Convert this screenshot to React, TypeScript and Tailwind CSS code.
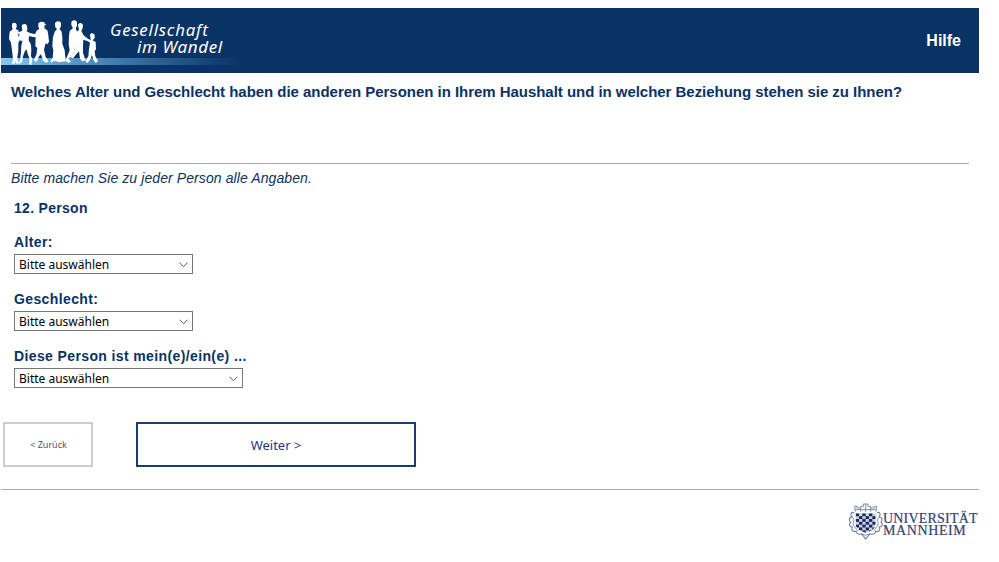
function People() {
  return (
    <svg className="relative block h-[65px] w-[100px] shrink-0" viewBox="3 24 300 195" fill="#fff">
      <path d="M36 74C35 66 49 66 50 74L50 81L47 87L55 91L57 98L54 107L59 121L55 129L55 152L52 171L54 184L60 190L50 191L45 183L46 190L36 192L39 178L36 151L33 128L27 116L29 95L38 88L36 82Z" />
      <path d="M65 78C66 70 79 70 81 77L82 88L80 94L88 98L103 103L101 110L87 109L86 121L93 134L94 151L93 168L97 178L94 195L87 192L89 178L84 164L79 148L75 153L69 169L66 187L57 191L61 175L63 156L64 137L68 119L65 124L54 118L52 111L59 106L56 97L67 92Z" />
      <path d="M115 70L122 65L132 66L135 71L139 74L134 76L133 85L142 91L145 106L147 125L142 133L137 130L132 149L137 171L146 184L139 188L130 183L123 163L117 169L110 186L101 181L109 164L112 144L106 139L107 112L99 111L91 106L94 101L105 102L111 91L118 87L115 80Z" />
      <path d="M165 72C165 61 182 61 183 70L183 79L179 87L185 95L187 111L187 131L194 151L197 184L187 185L178 187L169 184L160 183L154 189L151 182L158 174L160 151L157 137L159 110L165 94L171 88L166 82Z" />
      <path d="M214 68C215 58 230 59 231 68L231 78L227 85L232 97L230 121L225 139L222 157L211 171L205 177L213 184L206 189L196 182L202 168L209 151L206 133L207 107L209 93L219 84L214 76Z" />
      <path d="M234 76C236 66 248 68 249 77L247 87L244 92L250 105L261 114L268 119L264 124L250 119L249 137L249 158L254 174L258 181L247 184L240 176L237 154L230 161L219 175L208 171L220 160L224 144L225 120L227 99L237 89Z" />
      <path d="M270 105C271 97 283 98 284 106L284 114L278 121L287 126L288 148L284 153L286 169L294 184L287 189L280 179L276 165L271 178L263 189L256 184L265 169L267 146L270 128L260 121L263 117L272 120Z" />
    </svg>
  );
}

function Crest() {
  const checks = [];
  for (let row = 0; row < 7; row++) {
    for (let col = 0; col < 6; col++) {
      if ((row + col) % 2 === 0) checks.push(<rect key={`${row}-${col}`} x={45 + col * 10} y={56 + row * 8.5} width="10" height="8.5" />);
    }
  }
  return (
    <svg className="block h-[38px] w-[35px] shrink-0" viewBox="22 22 105 114" fill="none" stroke="#6d799d" strokeWidth="3.2">
      <defs>
        <clipPath id="shield"><path d="M45 56H105V87C105 101 92 109 75 114C58 109 45 101 45 87Z" /></clipPath>
      </defs>
      <path d="M44 51L42 35H49V40H60V35H68V28H82V35H90V40H101V35H108L106 51M44 45H106M60 40V51M75 28V51M90 40V51" strokeWidth="2.6" />
      <path d="M40 54C29 50 29 62 35 67C24 67 24 78 30 83C23 89 27 98 35 97C31 108 39 113 46 110C46 120 57 119 64 118L75 133L87 118C95 119 105 120 105 110C113 113 120 107 116 97C126 97 127 87 121 82C127 74 123 67 115 67C121 60 118 50 109 54" />
      <path d="M38 70C42 77 35 83 39 94C45 97 45 104 52 109M112 70C108 77 115 83 111 94C105 97 105 104 98 109M62 117L75 122L88 117" strokeWidth="2.4" />
      <path d="M45 56H105V87C105 101 92 109 75 114C58 109 45 101 45 87Z" fill="#c9cfde" stroke="none" />
      <g fill="#1a2a60" stroke="none" clipPath="url(#shield)">{checks}</g>
    </svg>
  );
}

function SelectField({ label, wide = false }: { label: string; wide?: boolean }) {
  return (
    <div className="h-[57px]">
      <div className="h-5 whitespace-nowrap text-[14px] font-bold leading-[17px] tracking-[0.38px]">{label}</div>
      <button className={`${wide ? "w-[229px]" : "w-[179px]"} flex h-5 items-center justify-between border border-[#777] bg-white pl-1 pr-1 font-['Noto_Sans',sans-serif] text-[12px] leading-[18px] text-black`}>
        <span className="whitespace-nowrap pt-px">Bitte auswählen</span>
        <svg className="mt-px block h-[6px] w-[9px]" viewBox="0 0 9 6" fill="none" stroke="#555"><path d="M.5 .7L4.5 4.7L8.5 .7" /></svg>
      </button>
    </div>
  );
}

export default function App() {
  return (
    <div className="h-[562px] w-[999px] overflow-hidden bg-white pl-px pt-2 font-['Liberation_Sans',sans-serif] text-[#093265]">
      <header className="relative flex h-[65px] w-[978px] bg-[#093265] text-white">
        <div className="absolute left-0 top-[50px] h-[7px] w-60 bg-linear-to-r from-[#86c9f2] via-[#3c79a8] to-[#093265]" />
        <People />
        <div className="relative ml-[9px] grow whitespace-nowrap pt-[14px] font-['Noto_Sans',sans-serif] text-[15.5px] italic leading-[17px]">
          <div className="w-max origin-left scale-x-[1.08] tracking-[0.75px]">Gesellschaft</div>
          <div className="ml-[27px] w-max origin-left scale-x-[1.1] tracking-[0.55px]">im Wandel</div>
        </div>
        <a className="mr-[18px] mt-[23px] text-[16px] font-bold leading-5">Hilfe</a>
      </header>
      <main>
        <div className="ml-[10px] h-[91px] w-[958px] border-b border-[#aaa] pt-[10px]">
          <h1 className="whitespace-nowrap text-[15px] font-bold leading-[18px] tracking-[-0.035px]">Welches Alter und Geschlecht haben die anderen Personen in Ihrem Haushalt und in welcher Beziehung stehen sie zu Ihnen?</h1>
        </div>
        <p className="ml-[10px] mt-[5px] whitespace-nowrap text-[14px] italic leading-[18px] tracking-[0.09px]">Bitte machen Sie zu jeder Person alle Angaben.</p>
        <div className="ml-[13px] mt-[13px]">
          <h2 className="mb-[17px] text-[14px] font-bold leading-[17px] tracking-[0.3px]">12. Person</h2>
          <SelectField label="Alter:" />
          <SelectField label="Geschlecht:" />
          <SelectField label="Diese Person ist mein(e)/ein(e) ..." wide />
        </div>
        <div className="ml-[2px] mt-[17px] flex gap-[43px] font-['Noto_Sans',sans-serif]">
          <button className="h-[45px] w-[90px] border-2 border-[#ccc] pl-px text-[9px] text-[#555]">&lt; Zurück</button>
          <button className="h-[45px] w-[280px] border-2 border-[#1b3a78] pt-[2px] text-[13px] text-[#1b3a78]">Weiter &gt;</button>
        </div>
      </main>
      <footer className="mt-[22px] flex w-[978px] justify-end border-t border-[#aaa] pt-[12px] text-[#34426f]">
        <Crest />
        <div className="w-[96px] whitespace-nowrap pt-[11px] font-['Liberation_Serif',serif] text-[14px] leading-[12px] [-webkit-text-stroke:0.2px]">
          <div className="tracking-[0.2px]">UNIVERSITÄT</div>
          <div className="tracking-[0.6px]">MANNHEIM</div>
        </div>
      </footer>
    </div>
  );
}
